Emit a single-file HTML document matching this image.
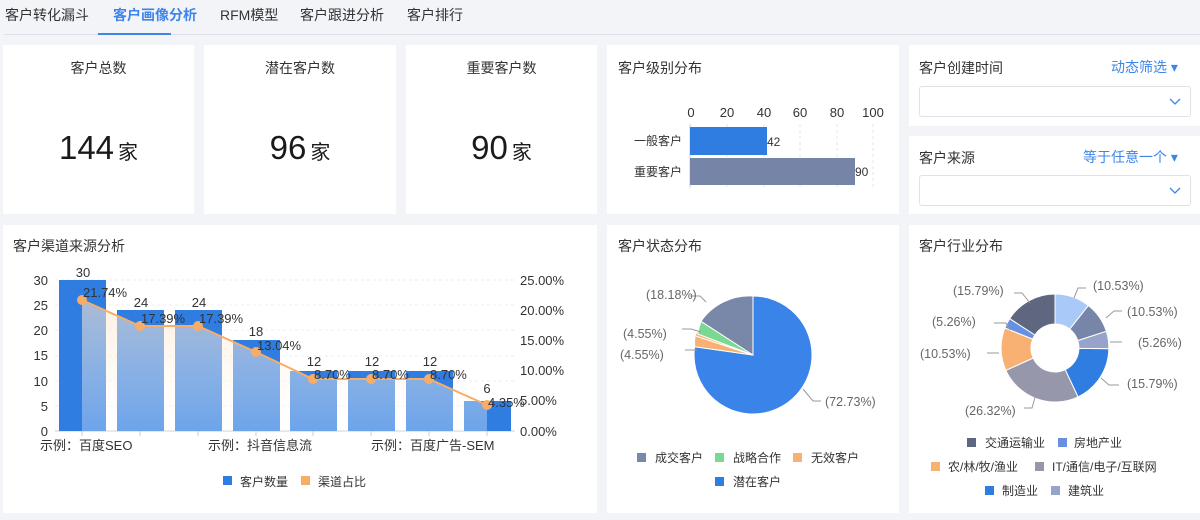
<!DOCTYPE html>
<html><head><meta charset="utf-8"><style>
*{margin:0;padding:0;box-sizing:border-box}
body{width:1200px;height:520px;background:#f3f4f8;font-family:"Liberation Sans","Noto Sans CJK SC",sans-serif;position:relative;overflow:hidden;color:#333}
.c{position:absolute;background:#fff}
.tab{position:absolute;top:5px;font-size:14px;color:#333}
.t{position:absolute;font-size:14px;color:#333}
.big{position:absolute;top:83px;width:100%;text-align:center;color:#1a1a1a;font-size:33px;line-height:40px}
.big span{font-size:20px;margin-left:4px}
.sel{position:absolute;border:1px solid #dfe2e8;border-radius:3px;background:#fff}
.blue{color:#3d85ea;position:absolute;font-size:14px}
svg{position:absolute;left:0;top:0}
</style></head><body>
<div class="tab" style="left:5px">客户转化漏斗</div>
<div class="tab" style="left:113px;color:#3d85ea;font-weight:bold">客户画像分析</div>
<div class="tab" style="left:220px">RFM模型</div>
<div class="tab" style="left:300px">客户跟进分析</div>
<div class="tab" style="left:407px">客户排行</div>
<div style="position:absolute;left:4px;top:34px;width:1196px;height:1px;background:#dde0e6"></div>
<div style="position:absolute;left:98px;top:33px;width:73px;height:2px;background:#3d85ea"></div>

<div class="c" style="left:3px;top:45px;width:191px;height:169px"><div class="t" style="width:100%;text-align:center;top:13px">客户总数</div><div class="big">144<span>家</span></div></div>
<div class="c" style="left:204px;top:45px;width:192px;height:169px"><div class="t" style="width:100%;text-align:center;top:13px">潜在客户数</div><div class="big">96<span>家</span></div></div>
<div class="c" style="left:406px;top:45px;width:191px;height:169px"><div class="t" style="width:100%;text-align:center;top:13px">重要客户数</div><div class="big">90<span>家</span></div></div>
<div class="c" style="left:607px;top:45px;width:292px;height:169px"><div class="t" style="left:11px;top:13px">客户级别分布</div></div>
<div class="c" style="left:909px;top:45px;width:291px;height:81px"><div class="t" style="left:10px;top:13px">客户创建时间</div><div class="blue" style="left:202px;top:12px">动态筛选 ▾</div><div class="sel" style="left:10px;top:41px;width:272px;height:31px"></div></div>
<div class="c" style="left:909px;top:136px;width:291px;height:78px"><div class="t" style="left:10px;top:12px">客户来源</div><div class="blue" style="left:174px;top:11px">等于任意一个 ▾</div><div class="sel" style="left:10px;top:39px;width:272px;height:31px"></div></div>
<div class="c" style="left:3px;top:225px;width:594px;height:288px"><div class="t" style="left:10px;top:11px">客户渠道来源分析</div></div>
<div class="c" style="left:607px;top:225px;width:292px;height:288px"><div class="t" style="left:11px;top:11px">客户状态分布</div></div>
<div class="c" style="left:909px;top:225px;width:291px;height:288px"><div class="t" style="left:10px;top:11px">客户行业分布</div></div>

<svg width="1200" height="520" font-family="Liberation Sans, Noto Sans CJK SC, sans-serif" font-size="12">
<path d="M1170 99l5 5 5-5" fill="none" stroke="#3d85ea" stroke-width="1.3"/>
<path d="M1170 188l5 5 5-5" fill="none" stroke="#3d85ea" stroke-width="1.3"/>
<g fill="#333" font-size="13" text-anchor="middle">
<text x="691" y="117">0</text><text x="727" y="117">20</text><text x="764" y="117">40</text><text x="800" y="117">60</text><text x="837" y="117">80</text><text x="873" y="117">100</text></g>
<g stroke="#e6e6e6" stroke-dasharray="3,3"><path d="M727 124V188M764 124V188M800 124V188M837 124V188M873 124V188"/></g>
<path d="M690 124V188" stroke="#ccc"/>
<rect x="690" y="127" width="77" height="28" fill="#2f7de1"/>
<rect x="690" y="158" width="165" height="27" fill="#7685a7"/>
<g fill="#333" font-size="12"><text x="767" y="146">42</text><text x="855" y="176">90</text>
<text x="682" y="145" text-anchor="end">一般客户</text><text x="682" y="176" text-anchor="end">重要客户</text></g>

<g stroke="#eee" stroke-dasharray="3,3"><path d="M55 280H515M55 305H515M55 330H515M55 356H515M55 381H515M55 406H515"/></g>
<path d="M55 431H515" stroke="#ccc"/>
<g fill="#333" font-size="13" text-anchor="end"><text x="48" y="285">30</text><text x="48" y="310">25</text><text x="48" y="335">20</text><text x="48" y="360">15</text><text x="48" y="386">10</text><text x="48" y="411">5</text><text x="48" y="436">0</text></g>
<g fill="#333" font-size="13"><text x="520" y="285">25.00%</text><text x="520" y="315">20.00%</text><text x="520" y="345">15.00%</text><text x="520" y="375">10.00%</text><text x="520" y="405">5.00%</text><text x="520" y="436">0.00%</text></g>
<defs><linearGradient id="ag" x1="0" y1="0" x2="0" y2="1"><stop offset="0" stop-color="#fde4cc" stop-opacity=".6"/><stop offset="1" stop-color="#fff" stop-opacity=".3"/></linearGradient></defs>
<g fill="#2f7de1">
<rect x="59" y="280" width="47" height="151"/><rect x="117" y="310" width="47" height="121"/><rect x="175" y="310" width="47" height="121"/><rect x="233" y="340" width="47" height="91"/><rect x="290" y="371" width="47" height="60"/><rect x="348" y="371" width="47" height="60"/><rect x="406" y="371" width="47" height="60"/><rect x="464" y="401" width="47" height="30"/></g>
<path d="M82 300L140 326L198 326L256 352L313 379L371 379L429 379L487 405L487 431L82 431Z" fill="url(#ag)"/>
<path d="M82 300L140 326L198 326L256 352L313 379L371 379L429 379L487 405" fill="none" stroke="#f7ad68" stroke-width="2"/>
<g fill="#f7ad68"><circle cx="82" cy="300" r="5"/><circle cx="140" cy="326" r="5"/><circle cx="198" cy="326" r="5"/><circle cx="256" cy="352" r="5"/><circle cx="313" cy="379" r="5"/><circle cx="371" cy="379" r="5"/><circle cx="429" cy="379" r="5"/><circle cx="487" cy="405" r="5"/></g>
<g fill="#333" font-size="13" text-anchor="middle"><text x="83" y="277">30</text><text x="141" y="307">24</text><text x="199" y="307">24</text><text x="256" y="336">18</text><text x="314" y="366">12</text><text x="372" y="366">12</text><text x="430" y="366">12</text><text x="487" y="393">6</text></g>
<g fill="#333" font-size="13"><text x="83" y="297">21.74%</text><text x="141" y="323">17.39%</text><text x="199" y="323">17.39%</text><text x="257" y="350">13.04%</text><text x="314" y="379">8.70%</text><text x="372" y="379">8.70%</text><text x="430" y="379">8.70%</text><text x="488" y="407">4.35%</text></g>
<g stroke="#ccc"><path d="M82 431v5M140 431v5M198 431v5M256 431v5M313 431v5M371 431v5M429 431v5M487 431v5"/></g>
<g fill="#333" font-size="13"><text x="40" y="450">示例：百度SEO</text><text x="208" y="450">示例：抖音信息流</text><text x="371" y="450">示例：百度广告-SEM</text></g>
<rect x="223" y="476" width="9" height="9" fill="#2f7de1"/><text x="240" y="486" fill="#333">客户数量</text>
<rect x="301" y="476" width="9" height="9" fill="#f7ad68"/><text x="318" y="486" fill="#333">渠道占比</text>

<g stroke="#fff" stroke-width="1">
<path d="M753 355L753 296A59 59 0 1 1 694.6 346.7Z" fill="#3a83e8"/>
<path d="M753 355L694.6 346.7A59 59 0 0 1 695 335.7Z" fill="#f8b172"/>
<path d="M753 355L695 335.7A59 59 0 0 1 697.4 331.1Z" fill="#f8b172"/>
<path d="M753 355L697.8 334A59 59 0 0 1 701 321.3Z" fill="#7ad991"/>
<path d="M753 355L701 321.3A59 59 0 0 1 753 296Z" fill="#7987a8"/>
</g>
<g fill="none" stroke="#999"><path d="M706 302l-6-6h-10M697 350h-12M701 332l-10-3h-9M803 389l10 12h8"/></g>
<g fill="#666" font-size="12.5"><text x="646" y="299">(18.18%)</text><text x="623" y="338">(4.55%)</text><text x="620" y="359">(4.55%)</text><text x="825" y="406">(72.73%)</text></g>
<g font-size="12" fill="#333">
<rect x="637" y="453" width="9" height="9" fill="#7987a8"/><text x="655" y="462">成交客户</text>
<rect x="715" y="453" width="9" height="9" fill="#7ad991"/><text x="733" y="462">战略合作</text>
<rect x="793" y="453" width="9" height="9" fill="#f8b172"/><text x="811" y="462">无效客户</text>
<rect x="715" y="477" width="9" height="9" fill="#2f7de1"/><text x="733" y="486">潜在客户</text></g>

<g transform="translate(1055 348)" stroke="#fff" stroke-width="1">
<path d="M0 -54A54 54 0 0 1 33.4 -42.4L14.8 -18.9A24 24 0 0 0 0 -24Z" fill="#a9c9f8"/>
<path d="M33.4 -42.4A54 54 0 0 1 51.4 -16.7L22.8 -7.4A24 24 0 0 0 14.8 -18.9Z" fill="#7685a8"/>
<path d="M51.4 -16.7A54 54 0 0 1 53.8 0.8L23.9 0.4A24 24 0 0 0 22.8 -7.4Z" fill="#98a3c9"/>
<path d="M53.8 0.8A54 54 0 0 1 23 48.9L10.2 21.7A24 24 0 0 0 23.9 0.4Z" fill="#2f7de1"/>
<path d="M23 48.9A54 54 0 0 1 -49.1 22.4L-21.8 10A24 24 0 0 0 10.2 21.7Z" fill="#9797ac"/>
<path d="M-49.1 22.4A54 54 0 0 1 -50.1 -20L-22.3 -8.9A24 24 0 0 0 -21.8 10Z" fill="#f8b172"/>
<path d="M-50.1 -20A54 54 0 0 1 -45.3 -29.4L-20.1 -13A24 24 0 0 0 -22.3 -8.9Z" fill="#6890e0"/>
<path d="M-45.3 -29.4A54 54 0 0 1 0 -54L0 -24A24 24 0 0 0 -20.1 -13Z" fill="#5f6780"/>
</g>
<g fill="none" stroke="#999"><path d="M1074 298l4-10h8M1106 318l8-7h8M1110 342h12M1101 378l8 7h10M1036 394l-4 14h-8M999 353h-12M1010 330l-4-7h-12M1030 303l-8-10h-8"/></g>
<g fill="#666" font-size="12.5"><text x="1093" y="290">(10.53%)</text><text x="1127" y="316">(10.53%)</text><text x="1138" y="347">(5.26%)</text><text x="1127" y="388">(15.79%)</text><text x="965" y="415">(26.32%)</text><text x="920" y="358">(10.53%)</text><text x="932" y="326">(5.26%)</text><text x="953" y="295">(15.79%)</text></g>
<g font-size="12" fill="#333">
<rect x="967" y="438" width="9" height="9" fill="#5f6780"/><text x="985" y="447">交通运输业</text>
<rect x="1058" y="438" width="9" height="9" fill="#6890e0"/><text x="1074" y="447">房地产业</text>
<rect x="931" y="462" width="9" height="9" fill="#f8b172"/><text x="948" y="471">农/林/牧/渔业</text>
<rect x="1035" y="462" width="9" height="9" fill="#9797ac"/><text x="1052" y="471">IT/通信/电子/互联网</text>
<rect x="985" y="486" width="9" height="9" fill="#2f7de1"/><text x="1002" y="495">制造业</text>
<rect x="1051" y="486" width="9" height="9" fill="#98a3c9"/><text x="1068" y="495">建筑业</text></g>
</svg>
</body></html>
